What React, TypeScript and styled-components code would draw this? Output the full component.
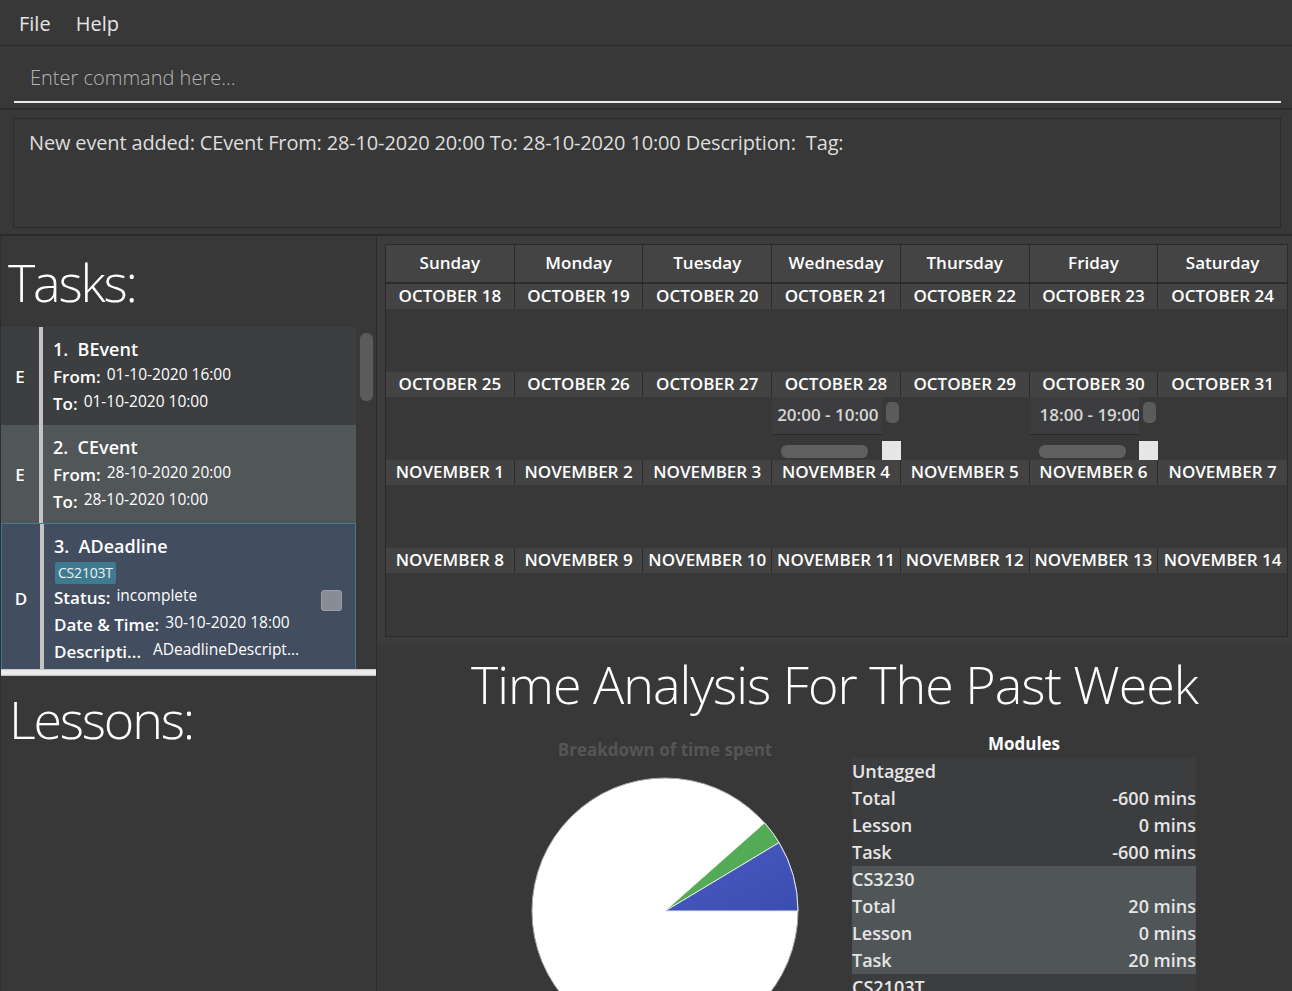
import styled, { createGlobalStyle } from 'styled-components';

const FONT = "'Open Sans', 'Noto Sans', 'DejaVu Sans', sans-serif";

const GlobalStyle = createGlobalStyle`
  html, body {
    margin: 0;
    padding: 0;
    background: #383838;
  }
  body {
    font-family: ${FONT};
    color: #ffffff;
  }
  * {
    box-sizing: border-box;
  }
`;

const Window = styled.div`
  width: 1292px;
  height: 991px;
  overflow: hidden;
  display: flex;
  flex-direction: column;
  background: #383838;
`;

const MenuBar = styled.div`
  height: 46px;
  display: flex;
  align-items: center;
  gap: 25px;
  padding: 1px 0 0 19px;
  border-bottom: 1px solid #2b2b2b;
  font-size: 20px;
  color: #e6e6e6;
`;

const CommandBox = styled.div`
  height: 64px;
  padding: 0 11px 0 14px;
  border-bottom: 2px solid #2e2e2e;
`;

const CommandInput = styled.input`
  width: 100%;
  height: 57px;
  background: transparent;
  border: none;
  border-bottom: 2px solid #e8e8e8;
  outline: none;
  padding: 8px 0 0 16px;
  font-family: ${FONT};
  font-size: 20px;
  font-weight: 300;
  color: #ffffff;

  &::placeholder {
    color: #b4b4b4;
  }
`;

const ResultArea = styled.div`
  height: 126px;
  padding: 8px 11px 6px 13px;
  border-bottom: 2px solid #2b2b2b;
`;

const ResultBox = styled.div`
  height: 110px;
  border: 1px solid #2b2b2b;
  padding: 10px 15px;
  font-size: 20px;
  letter-spacing: -0.16px;
  color: #dedede;
  white-space: pre;
`;

const Main = styled.div`
  flex: 1;
  display: flex;
  min-height: 0;
`;

const LeftPane = styled.div`
  width: 377px;
  display: flex;
  flex-direction: column;
  border-right: 1px solid #2b2b2b;
  border-left: 1px solid #2f2f2f;
`;

const TasksSection = styled.div`
  height: 433px;
  display: flex;
  flex-direction: column;
`;

const PaneTitle = styled.div`
  font-size: 52px;
  font-weight: 300;
  letter-spacing: -2.2px;
  line-height: 65px;
  padding-left: 7px;
  color: #ffffff;
`;

const TaskTitle = styled(PaneTitle)`
  padding-top: 13px;
  margin-bottom: 13px;
`;

const ListArea = styled.div`
  flex: 1;
  display: flex;
  overflow: hidden;
`;

const ListItems = styled.div`
  width: 355px;
  display: flex;
  flex-direction: column;
`;

const ScrollTrack = styled.div`
  flex: 1;
  padding: 6px 0 0 4px;
`;

const ScrollThumb = styled.div<{ $h: number }>`
  width: 13px;
  height: ${({ $h }) => $h}px;
  border-radius: 6px;
  background: #5b5b5b;
`;

type Variant = 'even' | 'odd' | 'selected';

const cardBg: Record<Variant, string> = {
  even: '#3c3e3f',
  odd: '#515658',
  selected: '#424d5f',
};

const TaskCard = styled.div<{ $variant: Variant }>`
  display: flex;
  flex-shrink: 0;
  background: ${({ $variant }) => cardBg[$variant]};
  border: ${({ $variant }) => ($variant === 'selected' ? '1px solid #3e7b91' : 'none')};
`;

const TypeLetter = styled.div`
  width: 38px;
  display: flex;
  align-items: center;
  justify-content: center;
  font-size: 17px;
  font-weight: 600;
`;

const TypeBar = styled.div`
  width: 4px;
  background: #c4c4c4;
`;

const CardBody = styled.div`
  flex: 1;
  padding: 8px 0 8px 10px;
  display: flex;
  flex-direction: column;
`;

const CardName = styled.div`
  font-size: 18px;
  font-weight: 600;
  line-height: 28px;
  white-space: pre;
`;

const FieldRow = styled.div`
  display: flex;
  align-items: flex-start;
  height: 27px;
  white-space: nowrap;
`;

const FieldLabel = styled.span<{ $w?: number }>`
  font-size: 17px;
  font-weight: 600;
  line-height: 27px;
  margin-right: 6px;
  ${({ $w }) => ($w ? `width: ${$w}px;` : '')}
`;

const FieldValue = styled.span`
  font-size: 15.5px;
  line-height: 22px;
`;

const Tag = styled.span`
  align-self: flex-start;
  margin: 2px 0 0 1px;
  padding: 0 3px;
  height: 22px;
  line-height: 22px;
  border-radius: 2px;
  background: #3e7b91;
  font-size: 14px;
  letter-spacing: -0.2px;
  color: #f0f0f0;
`;

const CheckCol = styled.div`
  display: flex;
  align-items: center;
  padding: 0 13px 0 8px;
`;

const CheckBox = styled.div`
  width: 21px;
  height: 21px;
  border-radius: 3px;
  background: #878c95;
  border: 1px solid #9aa0a8;
  margin-top: 4px;
`;

const HBar = styled.div`
  height: 7px;
  flex-shrink: 0;
  background: linear-gradient(#bdbdbd, #ececec 25%, #ececec 75%, #b4b4b4);
`;

const LessonsSection = styled.div`
  flex: 1;
`;

const LessonTitle = styled(PaneTitle)`
  padding-top: 10px;
  padding-left: 8px;
`;

const RightPane = styled.div`
  flex: 1;
  display: flex;
  flex-direction: column;
  background: #3c3c3c;
`;

const CalendarWrap = styled.div`
  padding: 8px 4px 6px 8px;
`;

const Calendar = styled.div`
  border: 1px solid #2b2b2b;
  background: #383838;
`;

const WeekGrid = styled.div`
  display: grid;
  grid-template-columns: repeat(7, 1fr);
`;

const DayHeader = styled.div`
  height: 39px;
  line-height: 36px;
  background: #444444;
  border-right: 1px solid #2b2b2b;
  border-bottom: 2px solid #2b2b2b;
  text-align: center;
  font-size: 17px;
  font-weight: 600;

  &:last-child {
    border-right: none;
  }
`;

const DayCell = styled.div`
  display: flex;
  flex-direction: column;
  height: 88px;
  min-width: 0;
`;

const DateLabel = styled.div`
  height: 25px;
  line-height: 24px;
  background: #434343;
  border-right: 1px solid #2b2b2b;
  text-align: center;
  font-size: 17px;
  font-weight: 600;
  white-space: nowrap;
  overflow: hidden;

  ${DayCell}:last-child & {
    border-right: none;
  }
`;

const EventPane = styled.div`
  height: 63px;
  display: grid;
  grid-template-columns: 1fr 19px;
  grid-template-rows: 44px 19px;
`;

const EventViewport = styled.div`
  overflow: hidden;
`;

const EventItem = styled.div<{ $indent: number }>`
  height: 38px;
  background: #3d3d3f;
  border-bottom: 1px solid #2b2b2b;
  padding-left: ${({ $indent }) => $indent}px;
  line-height: 36px;
  font-size: 17px;
  font-weight: 600;
  color: #d6d6d6;
  white-space: nowrap;
  overflow: hidden;
`;

const VScroll = styled.div`
  padding: 5px 0 0 4px;
`;

const VThumb = styled.div`
  width: 13px;
  height: 21px;
  border-radius: 5px;
  background: #5b5b5b;
`;

const HScroll = styled.div`
  padding: 4px 0 0 9px;
`;

const HThumb = styled.div`
  width: 87px;
  height: 13px;
  border-radius: 6px;
  background: #5f5f5f;
`;

const Corner = styled.div`
  background: #e6e6e6;
`;

const Splitter = styled.div`
  height: 4px;
  background: linear-gradient(#9a9a9a, #dadada 40%, #dadada 60%, #8c8c8c);
`;

const Analysis = styled.div`
  flex: 1;
  background: #383838;
  display: flex;
  flex-direction: column;
`;

const AnalysisTitle = styled.div`
  text-align: center;
  font-size: 52px;
  font-weight: 300;
  letter-spacing: -1px;
  line-height: 62px;
  padding-top: 10px;
`;

const AnalysisBody = styled.div`
  display: flex;
  gap: 17px;
  padding-left: 118px;
  margin-top: 1px;
`;

const ChartCol = styled.div`
  width: 340px;
  display: flex;
  flex-direction: column;
  align-items: center;
`;

const ChartTitle = styled.div`
  margin-top: 22px;
  font-size: 17px;
  font-weight: 700;
  line-height: 23px;
  color: #555555;
`;

const PieSvg = styled.svg`
  margin-top: 16px;
`;

const TableCol = styled.div`
  width: 344px;
  display: flex;
  flex-direction: column;
`;

const TableTitle = styled.div`
  margin-top: 16px;
  text-align: center;
  font-size: 17px;
  font-weight: 700;
  line-height: 23px;
  margin-bottom: 3px;
`;

const ModuleGroup = styled.div<{ $alt: boolean }>`
  background: ${({ $alt }) => ($alt ? '#505557' : '#3c3d3f')};
`;

const ModuleRow = styled.div`
  display: flex;
  justify-content: space-between;
  height: 27px;
  line-height: 27px;
  font-size: 18px;
  font-weight: 600;
  color: #e6e6e6;
`;

interface Field {
  label: string;
  value: string;
  w?: number;
}

interface Task {
  type: string;
  name: string;
  variant: Variant;
  tag?: string;
  fields: Field[];
  check?: boolean;
}

const tasks: Task[] = [
  {
    type: 'E',
    name: '1.  BEvent',
    variant: 'even',
    fields: [
      { label: 'From:', value: '01-10-2020 16:00' },
      { label: 'To:', value: '01-10-2020 10:00' },
    ],
  },
  {
    type: 'E',
    name: '2.  CEvent',
    variant: 'odd',
    fields: [
      { label: 'From:', value: '28-10-2020 20:00' },
      { label: 'To:', value: '28-10-2020 10:00' },
    ],
  },
  {
    type: 'D',
    name: '3.  ADeadline',
    variant: 'selected',
    tag: 'CS2103T',
    check: true,
    fields: [
      { label: 'Status:', value: 'incomplete' },
      { label: 'Date & Time:', value: '30-10-2020 18:00' },
      { label: 'Descripti...', value: 'ADeadlineDescript...', w: 93 },
    ],
  },
];

const days = ['Sunday', 'Monday', 'Tuesday', 'Wednesday', 'Thursday', 'Friday', 'Saturday'];

const weeks = [
  ['OCTOBER 18', 'OCTOBER 19', 'OCTOBER 20', 'OCTOBER 21', 'OCTOBER 22', 'OCTOBER 23', 'OCTOBER 24'],
  ['OCTOBER 25', 'OCTOBER 26', 'OCTOBER 27', 'OCTOBER 28', 'OCTOBER 29', 'OCTOBER 30', 'OCTOBER 31'],
  ['NOVEMBER 1', 'NOVEMBER 2', 'NOVEMBER 3', 'NOVEMBER 4', 'NOVEMBER 5', 'NOVEMBER 6', 'NOVEMBER 7'],
  ['NOVEMBER 8', 'NOVEMBER 9', 'NOVEMBER 10', 'NOVEMBER 11', 'NOVEMBER 12', 'NOVEMBER 13', 'NOVEMBER 14'],
];

const events: Record<string, { time: string; indent: number }> = {
  'OCTOBER 28': { time: '20:00 - 10:00', indent: 5 },
  'OCTOBER 30': { time: '18:00 - 19:00', indent: 10 },
};

const modules = [
  { name: 'Untagged', total: '-600 mins', lesson: '0 mins', task: '-600 mins' },
  { name: 'CS3230', total: '20 mins', lesson: '0 mins', task: '20 mins' },
  { name: 'CS2103T', total: '', lesson: '', task: '' },
];

// pie slice from angle a to b (degrees, counter-clockwise from east)
function slice(cx: number, cy: number, r: number, a: number, b: number) {
  const rad = (d: number) => (d * Math.PI) / 180;
  const x1 = cx + r * Math.cos(rad(a));
  const y1 = cy - r * Math.sin(rad(a));
  const x2 = cx + r * Math.cos(rad(b));
  const y2 = cy - r * Math.sin(rad(b));
  return `M ${cx} ${cy} L ${x1} ${y1} A ${r} ${r} 0 0 0 ${x2} ${y2} Z`;
}

function PieChart() {
  const c = 134;
  const r = 133;
  return (
    <PieSvg width={268} height={268} viewBox="0 0 268 268">
      <defs>
        <linearGradient id="blueFill" x1="0" y1="0" x2="1" y2="1">
          <stop offset="0" stopColor="#4a5cc2" />
          <stop offset="1" stopColor="#3b4db0" />
        </linearGradient>
      </defs>
      <circle cx={c} cy={c} r={r} fill="#ffffff" stroke="#a8a8a8" strokeWidth={1} />
      <path d={slice(c, c, r, 0, 31)} fill="url(#blueFill)" stroke="#e8e8e8" strokeWidth={1} />
      <path d={slice(c, c, r, 31, 41.5)} fill="#53ab55" stroke="#e8e8e8" strokeWidth={1} />
    </PieSvg>
  );
}

export default function App() {
  return (
    <Window>
      <GlobalStyle />
      <MenuBar>
        <span>File</span>
        <span>Help</span>
      </MenuBar>

      <CommandBox>
        <CommandInput placeholder="Enter command here..." />
      </CommandBox>

      <ResultArea>
        <ResultBox>
          {'New event added: CEvent From: 28-10-2020 20:00 To: 28-10-2020 10:00 Description:  Tag:'}
        </ResultBox>
      </ResultArea>

      <Main>
        <LeftPane>
          <TasksSection>
            <TaskTitle>Tasks:</TaskTitle>
            <ListArea>
              <ListItems>
                {tasks.map(task => (
                  <TaskCard key={task.name} $variant={task.variant}>
                    <TypeLetter>{task.type}</TypeLetter>
                    <TypeBar />
                    <CardBody>
                      <CardName>{task.name}</CardName>
                      {task.tag && <Tag>{task.tag}</Tag>}
                      {task.fields.map(f => (
                        <FieldRow key={f.label}>
                          <FieldLabel $w={f.w}>{f.label}</FieldLabel>
                          <FieldValue>{f.value}</FieldValue>
                        </FieldRow>
                      ))}
                    </CardBody>
                    {task.check && (
                      <CheckCol>
                        <CheckBox />
                      </CheckCol>
                    )}
                  </TaskCard>
                ))}
              </ListItems>
              <ScrollTrack>
                <ScrollThumb $h={68} />
              </ScrollTrack>
            </ListArea>
          </TasksSection>
          <HBar />
          <LessonsSection>
            <LessonTitle>Lessons:</LessonTitle>
          </LessonsSection>
        </LeftPane>

        <RightPane>
          <CalendarWrap>
            <Calendar>
              <WeekGrid>
                {days.map(d => (
                  <DayHeader key={d}>{d}</DayHeader>
                ))}
              </WeekGrid>
              {weeks.map((week, i) => (
                <WeekGrid key={i}>
                  {week.map(date => (
                    <DayCell key={date}>
                      <DateLabel>{date}</DateLabel>
                      {events[date] && (
                        <EventPane>
                          <EventViewport>
                            <EventItem $indent={events[date].indent}>{events[date].time}</EventItem>
                          </EventViewport>
                          <VScroll>
                            <VThumb />
                          </VScroll>
                          <HScroll>
                            <HThumb />
                          </HScroll>
                          <Corner />
                        </EventPane>
                      )}
                    </DayCell>
                  ))}
                </WeekGrid>
              ))}
            </Calendar>
          </CalendarWrap>
          <Splitter />
          <Analysis>
            <AnalysisTitle>Time Analysis For The Past Week</AnalysisTitle>
            <AnalysisBody>
              <ChartCol>
                <ChartTitle>Breakdown of time spent</ChartTitle>
                <PieChart />
              </ChartCol>
              <TableCol>
                <TableTitle>Modules</TableTitle>
                {modules.map((m, i) => (
                  <ModuleGroup key={m.name} $alt={i % 2 === 1}>
                    <ModuleRow>
                      <span>{m.name}</span>
                    </ModuleRow>
                    {m.total && (
                      <>
                        <ModuleRow>
                          <span>Total</span>
                          <span>{m.total}</span>
                        </ModuleRow>
                        <ModuleRow>
                          <span>Lesson</span>
                          <span>{m.lesson}</span>
                        </ModuleRow>
                        <ModuleRow>
                          <span>Task</span>
                          <span>{m.task}</span>
                        </ModuleRow>
                      </>
                    )}
                  </ModuleGroup>
                ))}
              </TableCol>
            </AnalysisBody>
          </Analysis>
        </RightPane>
      </Main>
    </Window>
  );
}
